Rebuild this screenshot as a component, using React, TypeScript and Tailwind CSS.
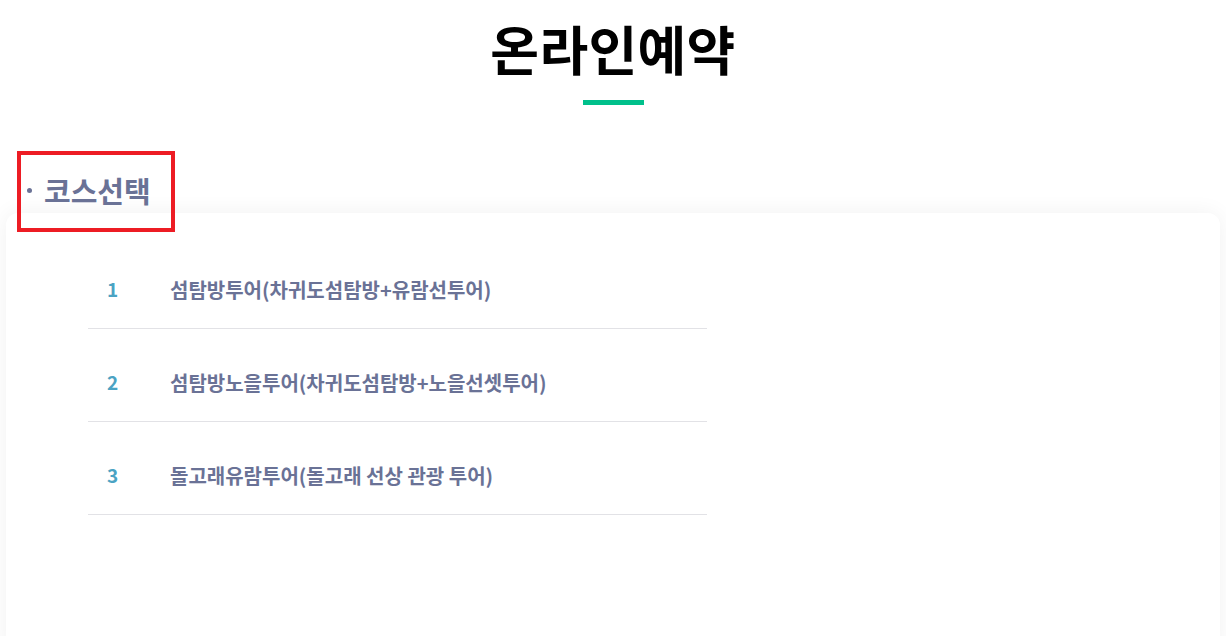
import React from "react";

const items = [
  { n: 1, t: "섬탐방투어(차귀도섬탐방+유람선투어)" },
  { n: 2, t: "섬탐방노을투어(차귀도섬탐방+노을선셋투어)" },
  { n: 3, t: "돌고래유람투어(돌고래 선상 관광 투어)" },
];

export default function App() {
  return (
    <div
      className="w-[1226px] h-[636px] overflow-hidden bg-white"
      style={{ fontFamily: '"Noto Sans CJK KR", "Noto Sans", sans-serif' }}
    >
      <div className="flex flex-col items-center pt-[16px]">
        <h1 className="text-[53px] font-bold leading-[64px] tracking-[0.3px] text-black">
          온라인예약
        </h1>
        <div className="mt-[20px] w-[61px] h-[5px] bg-[#00c08b]" />
      </div>
      <div className="relative mt-[60px] pl-[27px] pt-[4px] h-[46px] flex items-center">
        <span className="w-[5px] h-[5px] rounded-full bg-[#6a7296] mr-[12px]" />
        <span className="text-[29px] font-bold leading-none text-[#6a7296]">코스선택</span>
        <div className="absolute left-[17px] top-[-14px] w-[158px] h-[81px] border-4 border-[#ed1c24] z-10" />
      </div>
      <div className="mx-[6px] mt-[2px] h-[440px] rounded-[12px] bg-white shadow-[0_0_22px_rgba(0,0,0,0.06)] pt-[23px]">
        <ul className="ml-[82px] w-[619px]">
          {items.map((it) => (
            <li
              key={it.n}
              className="h-[93px] pt-[15px] flex items-center border-b border-[#e2e2e6]"
            >
              <span className="w-[82px] pl-[19px] text-[19px] font-bold text-[#4ba3c3]">
                {it.n}
              </span>
              <span className="text-[20px] font-bold text-[#6a7296]">{it.t}</span>
            </li>
          ))}
        </ul>
      </div>
    </div>
  );
}
